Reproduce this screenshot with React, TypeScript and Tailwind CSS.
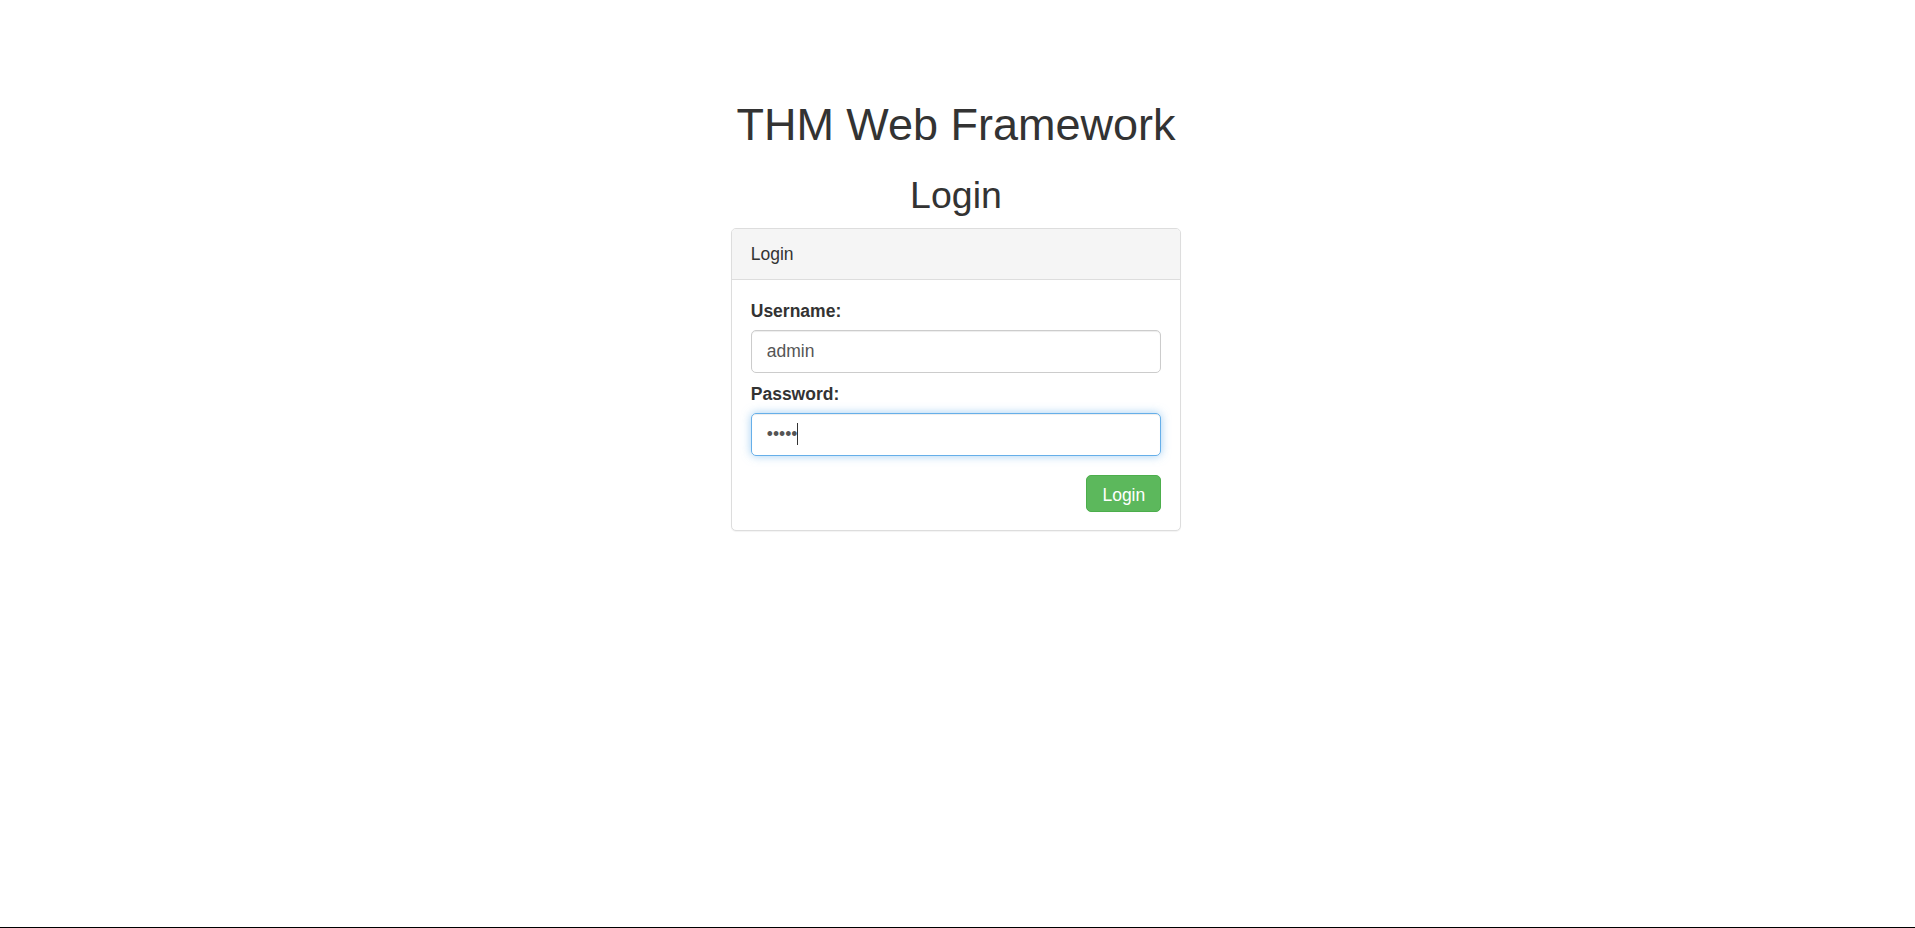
export default function App() {
  return (
    <div className="flex h-[928px] flex-col bg-white font-['Liberation_Sans',Arial,sans-serif] text-[17.5px] leading-[25px] text-[#333]">
      <main className="pr-[3px] pt-[100px]">
        <h1 className="text-center text-[45px] leading-[49.5px] font-normal">
          THM Web Framework
        </h1>
        <h2 className="mt-[25px] text-center text-[37.5px] leading-[41.25px] font-normal">
          Login
        </h2>
        <div className="mx-auto mt-[12.5px] w-[450px] rounded-[5px] border border-[#ddd] bg-white shadow-[0_1px_1px_rgba(0,0,0,0.05)]">
          <div className="rounded-t-[4px] border-b border-[#ddd] bg-[#f5f5f5] px-[18.75px] py-[12.5px]">
            Login
          </div>
          <form
            className="px-[18.75px] pt-[18.75px] pb-[17.5px]"
            onSubmit={(e) => e.preventDefault()}
          >
            <label htmlFor="username" className="mb-[6.25px] block font-bold">
              Username:
            </label>
            <input
              id="username"
              type="text"
              defaultValue="admin"
              className="block h-[42.5px] w-full rounded-[5px] border border-[#ccc] px-[15px] py-[7.5px] text-[#555] shadow-[inset_0_1px_1px_rgba(0,0,0,0.075)] outline-none"
            />
            <label
              htmlFor="password"
              className="mb-[6.25px] mt-[9.25px] block font-bold"
            >
              Password:
            </label>
            <div className="relative">
              <input
                id="password"
                type="password"
                defaultValue="admin"
                className="block h-[42.5px] w-full rounded-[5px] border border-[#66afe9] px-[15px] py-[7.5px] text-[#555] caret-transparent shadow-[inset_0_1px_1px_rgba(0,0,0,0.075),0_0_10px_rgba(102,175,233,0.6)] outline-none"
              />
              <span className="pointer-events-none absolute left-[46px] top-[10px] h-[22px] w-px bg-[#333]" />
            </div>
            <div className="mt-[18.75px] flex justify-end">
              <button
                type="submit"
                className="rounded-[5px] border border-[#4cae4c] bg-[#5cb85c] px-[15px] pt-[7.25px] pb-[3.25px] leading-[25px] text-white"
              >
                Login
              </button>
            </div>
          </form>
        </div>
      </main>
      <div className="mt-auto h-px bg-black" />
    </div>
  );
}
